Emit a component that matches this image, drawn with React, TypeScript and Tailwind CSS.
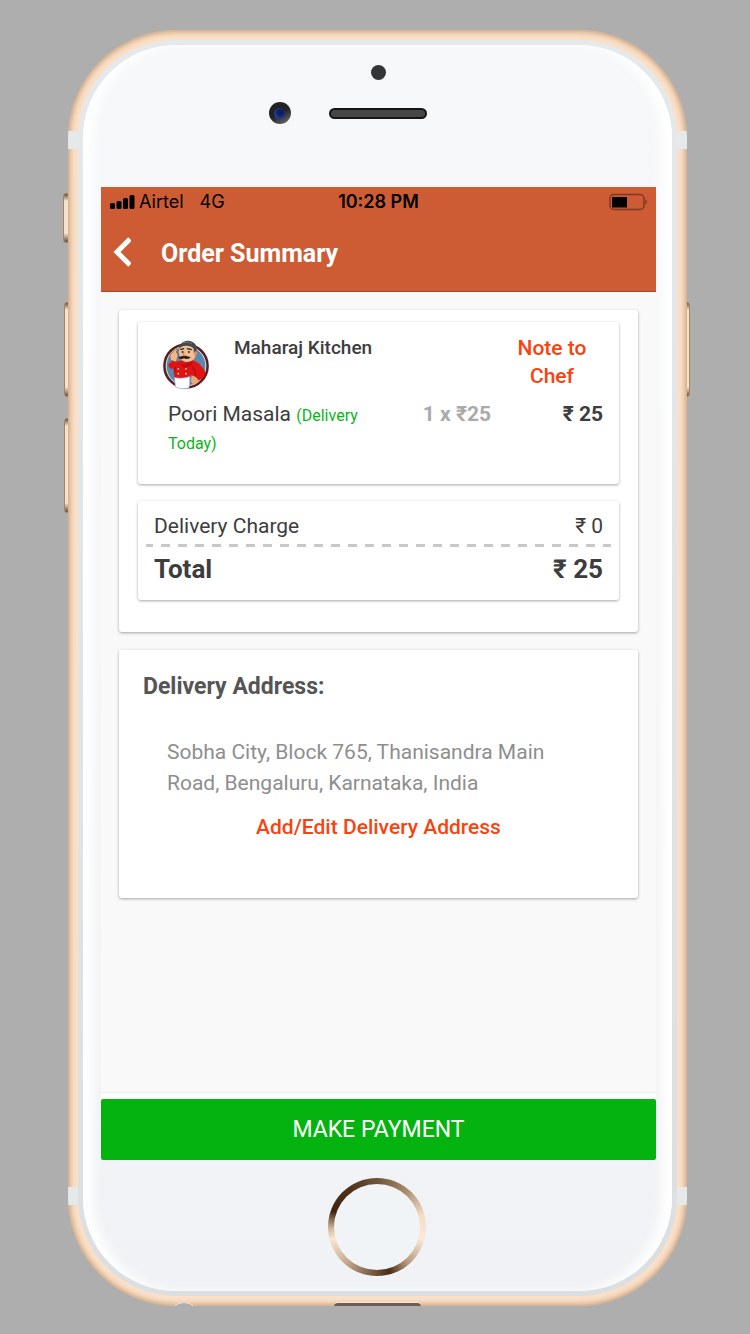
import type { ReactNode } from 'react'

const ORDER = {
  kitchen: 'Maharaj Kitchen',
  items: [{ name: 'Poori Masala', when: '(Delivery Today)', qty: '1 x ₹25', price: '₹ 25' }],
  delivery: '₹ 0',
  total: '₹ 25',
  address: 'Sobha City, Block 765, Thanisandra Main Road, Bengaluru, Karnataka, India',
}

const CARD = 'rounded-[3px] bg-white shadow-[0_1px_3px_rgba(0,0,0,0.35)]'

function ChefLogo() {
  return (
    <svg viewBox="0 0 48 52" className="mt-1.5 h-[50px] w-12" role="img" aria-label="Maharaj Kitchen logo">
      <circle cx="24" cy="27" r="22.500" fill="#5f86ad" stroke="#5b1c1a" strokeWidth="2.500" />
      <circle cx="24" cy="27" r="20.600" fill="none" stroke="#dfe6ee" strokeWidth="0.900" />
      <path d="M6 25c3-4 6-3 10-3l6-1h9c6 2 9 6 12 10 2 4 1 7-2 9-3 2-5 2-8 1l-4-5-1 4H12l-1-10c-4 0-6-2-5-5z" fill="#e01212" />
      <path d="M30 27c2 3 4 6 4 10M13 28l-1 6" stroke="#990c0c" strokeWidth="1" fill="none" />
      <path d="M30 37c2 0 4 2 6 3l1 4-5 3-3-4z" fill="#e9a877" />
      <path d="M8 21c-1-4-1-6 2-8 1-1 3-5 4-4 2 0 0 3 0 4 2 1 2 4 1 6l-1 4z" fill="#f0b98b" stroke="#8c4a2e" strokeWidth="0.700" />
      <path d="M17 8c2-3 14-4 16 1 2 3 2 8-1 11-3 3-9 4-12 1-3-3-4-9-3-13z" fill="#f2bd90" />
      <path d="M17 7c2-5 6-7 11-6 5 1 8 5 7 10l-1 3-2-1V9c-2-2-4-3-7-3s-5 0-8 3z" fill="#45484b" />
      <path d="M21 3c3-1 6-1 9 1" stroke="#777b7e" strokeWidth="1" fill="none" />
      <path d="M33 12c2-1 3 1 2 3-1 1-2 2-3 1z" fill="#dd9868" />
      <path d="M18 10l4-1M25 9l5 1" stroke="#2a2424" strokeWidth="1.200" />
      <circle cx="20.500" cy="12.500" r="1" fill="#2a2424" />
      <circle cx="27" cy="12.500" r="1" fill="#2a2424" />
      <path d="M22 13l-1 3h3" stroke="#b7744c" strokeWidth="0.800" fill="none" />
      <path d="M16 18c2 0 4-2 6-1 3-1 5 1 7 1-2 2-5 2-7 1-2 1-5 1-6-1z" fill="#251b1b" />
      <path d="M17 23l5 3 8-4 1 3-9 4z" fill="#b90d0d" />
      <circle cx="16" cy="30" r="0.900" fill="#f6d2c6" />
      <circle cx="24" cy="30" r="0.900" fill="#f6d2c6" />
      <circle cx="16" cy="35" r="0.900" fill="#f6d2c6" />
      <circle cx="24" cy="35" r="0.900" fill="#f6d2c6" />
      <path d="M12 39c5 1 10 1 16-1 0 4 0 8-1 12-5 1-9 1-14-1z" fill="#fbfcff" stroke="#9aa7c4" strokeWidth="0.700" />
    </svg>
  )
}

function StatusBar() {
  return (
    <div className="grid h-[30px] grid-cols-3 items-center px-2 font-['Inter',sans-serif] text-lg text-black">
      <div className="flex items-center whitespace-nowrap">
        <svg viewBox="0 0 26 16" className="mr-1 h-4 w-[26px]" aria-hidden="true">
          <rect x="1" y="9" width="5" height="6" rx="1.500" />
          <rect x="7.500" y="7" width="5" height="8" rx="1.500" />
          <rect x="14" y="4" width="5" height="11" rx="1.500" />
          <rect x="20.500" y="1" width="5" height="14" rx="1.500" />
        </svg>
        Airtel
        <span className="ml-4">4G</span>
      </div>
      <div className="text-center font-semibold">10:28 PM</div>
      <svg viewBox="0 0 40 18" className="h-[18px] w-10 justify-self-end" aria-hidden="true">
        <rect x="2" y="1.500" width="34" height="15" rx="4" fill="none" stroke="#7d3820" strokeWidth="1.500" />
        <rect x="4" y="4" width="15" height="10.500" />
        <path d="M37.500 6.500c2 1 2 4 0 5z" fill="#7d3820" />
      </svg>
    </div>
  )
}

function OrderCard() {
  return (
    <section className={`${CARD} px-[19px] pt-3 pb-8`}>
      <div className={`${CARD} flex flex-col gap-2.5 pt-3 pr-4 pb-7 pl-[30px]`}>
        <div className="flex">
          <div className="-ml-1.5 w-[72px] shrink-0">
            <ChefLogo />
          </div>
          <h2 className="flex-1 text-[19px] font-medium">{ORDER.kitchen}</h2>
          <button className="h-14 w-[102px] self-start px-3 text-center font-medium text-[#f9430f]">Note to Chef</button>
        </div>
        {ORDER.items.map((item) => (
          <div key={item.name} className="flex">
            <p className="flex-1 pr-5">
              {item.name} <span className="text-base text-[#0cb41b]">{item.when}</span>
            </p>
            <p className="w-[92px] text-center font-bold text-[#aaa]">{item.qty}</p>
            <p className="w-[100px] text-right font-bold">{item.price}</p>
          </div>
        ))}
      </div>

      <dl className={`${CARD} mt-[17px] px-2 pt-[11px] pb-[13px]`}>
        <div className="flex justify-between px-2">
          <dt>Delivery Charge</dt>
          <dd>{ORDER.delivery}</dd>
        </div>
        <div className="mt-1 flex justify-between bg-[repeating-linear-gradient(90deg,#c8c8c8_0_7px,transparent_7px_15px,#c8c8c8_15px_17px)] bg-[length:100%_3px] bg-no-repeat px-2 pt-[7px] text-[26px] leading-9 font-bold">
          <dt>Total</dt>
          <dd>{ORDER.total}</dd>
        </div>
      </dl>
    </section>
  )
}

function AddressCard() {
  return (
    <section className={`${CARD} px-6 pt-[21px] pb-[57px]`}>
      <h2 className="text-[23px] leading-8 font-bold text-[#555]">Delivery Address:</h2>
      <p className="mt-[34px] pr-12 pl-6 leading-[31px] text-[#8e8e8e]">{ORDER.address}</p>
      <div className="mt-3.5 text-center">
        <a href="#address" className="font-medium text-[#f9430f]">
          Add/Edit Delivery Address
        </a>
      </div>
    </section>
  )
}

function SideKey({ className }: { className: string }) {
  return (
    <span
      className={`absolute w-[7px] rounded-[3px] border border-[#a88562] bg-[linear-gradient(180deg,#6b5138_0,#f8e2cd_7px,#f8e2cd_calc(100%-9px),#6b5138_100%)] ${className}`}
    />
  )
}

function Phone({ children }: { children: ReactNode }) {
  return (
    <div className="relative flex flex-1 flex-col">
      <SideKey className="top-[163px] -left-[5px] h-[50px]" />
      <SideKey className="top-[272px] -left-1 h-[95px]" />
      <SideKey className="top-[388px] -left-1 h-[95px]" />
      <SideKey className="top-[272px] -right-[3px] h-[95px]" />

      <div className="relative flex flex-1 flex-col overflow-hidden rounded-[108px] bg-[#fae0c8] p-2.5 shadow-[inset_0_0_6px_1px_#bd9068]">
        <span className="absolute top-[101px] left-0 h-[18px] w-full bg-[#e6e9e9]" />
        <span className="absolute bottom-[101px] left-0 h-[18px] w-full bg-[#e6e9e9]" />
        <span className="absolute -bottom-[26px] left-[101px] size-[30px] rounded-full border border-[#efe0d0] bg-[#aeaeae]" />
        <span className="absolute bottom-0 left-[266px] h-1 w-[87px] rounded-t-md border-t border-[#f7e4d2] bg-[#6b5d51]" />

        <div className="relative flex flex-1 flex-col rounded-[98px] bg-[linear-gradient(180deg,#e6e9eb,#dcdfe1)] p-[5px]">
          <div className="flex flex-1 flex-col rounded-[93px] bg-[linear-gradient(180deg,#f6f8fa,#f0f2f5)] pr-4 pl-[18px] shadow-[inset_14px_0_12px_-4px_#fff,inset_-14px_0_12px_-4px_#fff]">
            <div className="flex h-[142px] flex-col items-center pt-5">
              <span className="size-[15px] rounded-full bg-[#333436]" />
              <div className="mt-[22px] flex items-center gap-[38px] pr-[62px]">
                <span className="flex size-[22px] items-center justify-center rounded-full bg-[linear-gradient(150deg,#222_50%,#777)]">
                  <span className="size-[11px] rounded-full bg-[radial-gradient(circle_at_60%_40%,#10195f_20%,#2a58b8)]" />
                </span>
                <span className="h-[11px] w-[98px] rounded-full border-2 border-[#161616] bg-[#474747]" />
              </div>
            </div>
            {children}
            <div className="flex justify-center pt-[18px] pr-[3px] pb-[15px]">
              <button
                aria-label="Home"
                className="size-[98px] rounded-full bg-[conic-gradient(from_0deg,#6d543b,#a08466_35deg,#f3dcc5_75deg,#fbe9d8_105deg,#b5977a_140deg,#4a2d15_165deg,#816449_190deg,#c4a88d_220deg,#fbe6d2_255deg,#d4b89d_268deg,#3f2511_290deg,#4f331b_325deg,#6d543b)] p-[6px]"
              >
                <span className="block size-full rounded-full bg-[#f1f4f6]" />
              </button>
            </div>
          </div>
        </div>
      </div>
    </div>
  )
}

export default function App() {
  return (
    <div className="flex min-h-screen flex-col bg-[#aeaeae] pt-[30px] pr-[63px] pb-7 pl-[68px]">
      <Phone>
        <div className="flex flex-1 flex-col bg-[#f9f9f9] font-['Roboto',sans-serif] text-[21px] leading-7 text-[#3d3d3d]">
          <header className="border-b border-[#a3482a] bg-[#cd5c34]">
            <StatusBar />
            <div className="flex h-[74px] items-center gap-[30px] pl-2.5">
              <button aria-label="Back" className="pb-1">
                <svg viewBox="0 0 20 32" className="h-8 w-5" fill="none" stroke="#fff" strokeWidth="5">
                  <path d="M19 3L6 16L19 29" />
                </svg>
              </button>
              <h1 className="text-[25px] leading-8 font-bold text-white">Order Summary</h1>
            </div>
          </header>
          <main className="flex flex-1 flex-col gap-[18px] px-[18px] pt-[18px]">
            <OrderCard />
            <AddressCard />
          </main>
          <footer className="border-t border-[#eee] bg-white pt-1.5">
            <button className="h-[61px] w-full rounded-[2px] bg-[#04b310] text-[23px] text-white">MAKE PAYMENT</button>
          </footer>
        </div>
      </Phone>
    </div>
  )
}
